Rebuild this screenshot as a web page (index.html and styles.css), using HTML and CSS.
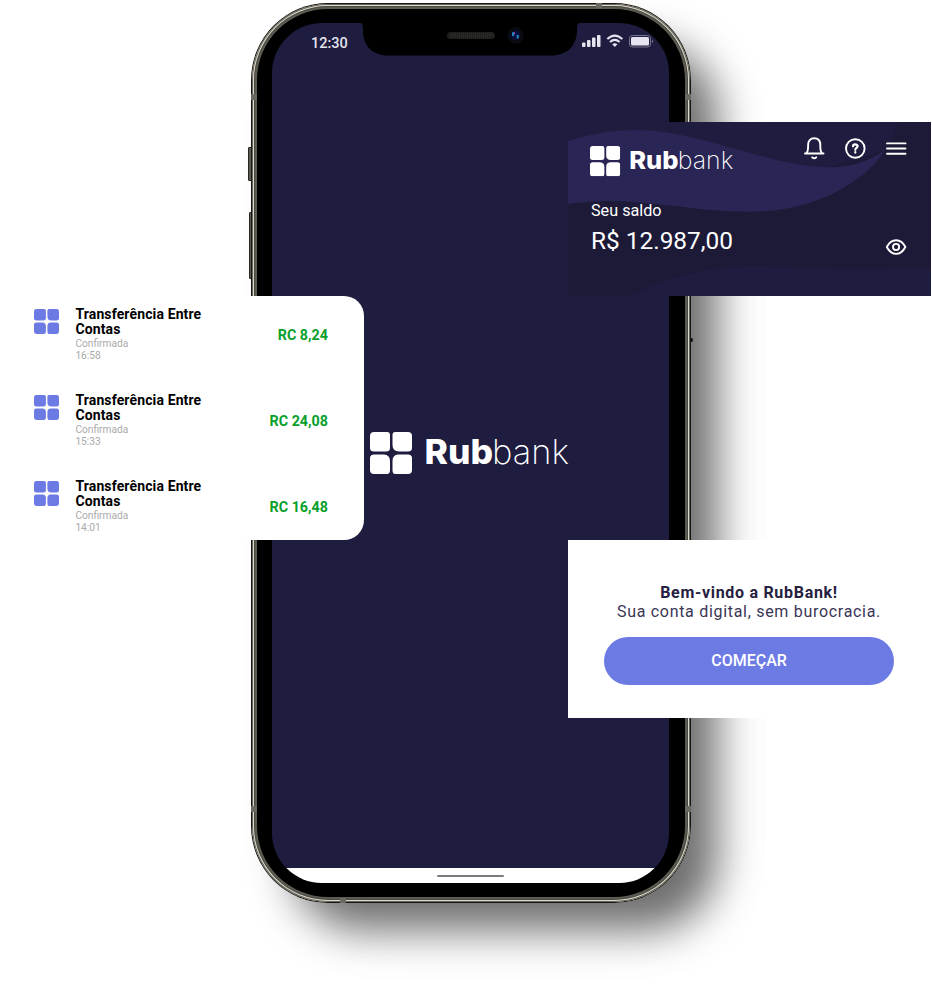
FILE: index.html
```html
<!DOCTYPE html>
<html lang="pt-BR">
<head>
<meta charset="utf-8">
<title>RubBank</title>
<link rel="stylesheet" href="styles.css">
</head>
<body>
<svg class="defs" width="0" height="0" aria-hidden="true">
  <symbol id="mark" viewBox="0 0 42 42">
    <path d="M4 0H17Q20 0 20 3V16Q20 19.500 16 19.500H4Q0 19.500 0 16V4Q0 0 4 0ZM25 0H38Q42 0 42 4V16Q42 19.500 38 19.500H29Q22.500 19 22.500 13V3Q22.500 0 25 0ZM4 22.500H14Q20 23 20 29V38Q20 42 17 42H4Q0 42 0 38V26Q0 22.500 4 22.500ZM28 22.500H38Q42 22.500 42 26V38Q42 42 38 42H25Q22.500 42 22.500 38V29Q22.500 23 28 22.500Z"/>
  </symbol>
</svg>
<main class="stage">
  <section class="phone">
    <i class="button mute"></i><i class="button volume"></i><i class="button power"></i>
    <div class="rim"><div class="band"><div class="bezel"><div class="screen">
      <header class="status">
        <span class="clock">12:30</span>
        <svg class="signals" width="72" height="14" viewBox="0 0 72 14">
          <g fill="#e6e4ee"><rect x="0" y="8.500" width="3.500" height="4.500" rx="1"/><rect x="5" y="6" width="3.500" height="7" rx="1"/><rect x="10" y="3.500" width="3.500" height="9.500" rx="1"/><rect x="15" y="1" width="3.500" height="12" rx="1"/></g>
          <g fill="none" stroke="#e6e4ee" stroke-width="2.100"><path d="M25.300 5.100Q32.800-2 40.300 5.100"/><path d="M28 8Q32.800 3.700 37.600 8"/></g>
          <path d="M30.200 10.300Q32.800 8.300 35.400 10.300L32.800 13Z" fill="#e6e4ee"/>
          <rect x="47.500" y="1.500" width="21" height="11.500" rx="3" fill="none" stroke="#77758d"/><rect x="49" y="3" width="18" height="8.500" rx="1.500" fill="#e6e4ee"/><path d="M70 5.500Q72.200 7.200 70 9Z" fill="#77758d"/>
        </svg>
      </header>
      <svg class="logo large" width="200" height="43" viewBox="0 0 200 43">
        <use href="#mark" x="0" y="0" width="42" height="42"/>
        <text class="rub" x="54.500" y="32.300" textLength="68.500" lengthAdjust="spacingAndGlyphs">Rub</text>
        <text class="bank" x="122" y="32.300" textLength="77" lengthAdjust="spacingAndGlyphs">bank</text>
      </svg>
      <footer class="home"><i></i></footer>
    </div></div></div></div>
    <svg class="notch" width="214" height="34" viewBox="0 0 214 34">
      <path d="M-5 0Q0 0 0 6V9C0 24 10 33.500 25 33.500H188C204 33.500 213.500 24 214 9V6Q214 0 219 0V-5H-5Z"/>
      <rect x="84" y="10" width="48" height="7" rx="3.500" fill="#20201f"/>
      <path d="M88 13.500H129" stroke="#2c2c2a" stroke-width="4" stroke-dasharray="1 1"/>
      <circle cx="152.500" cy="13.300" r="8.300" fill="#090a12"/><circle cx="152.500" cy="13.300" r="4.500" fill="#080e40"/>
      <path d="M150 10.300V14M154.700 13V16.500" stroke="#2088bd" stroke-width="2"/><path d="M151.500 10V12.500" stroke="#8a38c4"/>
    </svg>
    <i class="seam s1"></i><i class="seam s2"></i><i class="seam s3"></i><i class="seam s4"></i><i class="seam flat s5"></i><i class="seam flat s6"></i>
  </section>

  <section class="balance">
    <svg class="waves" width="363" height="174" viewBox="0 0 363 174">
      <path d="M0 0H330C326 14 323 21 317 28L200 65L0 82Z" fill="#1e1c3f"/>
      <path d="M0 19C58 1 96 7 150 22C220 42 276 60 318 27C294 64 245 86 199 89C128 94 69 71 0 82Z" fill="#292554"/>
      <path d="M62 174C104 153 145 143 190 144S270 149 363 145V174Z" fill="#1e1c3f"/>
    </svg>
    <div class="top">
      <svg class="logo" width="144" height="31" viewBox="0 0 200 43">
        <use href="#mark" x="0" y="0" width="42" height="42"/>
        <text class="rub" x="54.500" y="32.300" textLength="68.500" lengthAdjust="spacingAndGlyphs">Rub</text>
        <text class="bank" x="122" y="32.300" textLength="77" lengthAdjust="spacingAndGlyphs">bank</text>
      </svg>
      <nav class="icons">
        <svg width="22" height="24" viewBox="0 0 22 24"><path d="M2 17.500H20.500M3.500 17C5.300 15 5.100 12.700 5.100 9C5.100 4.700 7.300 2.300 11.200 2.300S17.300 4.700 17.300 9C17.300 12.700 17.100 15 18.900 17M9.200 21.300Q11.200 23.300 13.200 21.300"/></svg>
        <svg width="22" height="24" viewBox="0 0 22 24"><circle cx="11.300" cy="12.500" r="9.300"/><path d="M9 10.300C9 7.700 13.600 7.600 13.600 10.300C13.600 12 11.300 12 11.300 13.800M11.300 16.200V16.600" stroke-width="2.200"/></svg>
        <svg width="22" height="24" viewBox="0 0 22 24"><path d="M2 7.400H20.500M2 12.500H20.500M2 17.700H20.500"/></svg>
      </nav>
    </div>
    <div class="bottom">
      <div><p class="label">Seu saldo</p><p class="amount">R$ 12.987,00</p></div>
      <svg class="eye" width="22" height="18" viewBox="0 0 22 18"><path d="M1.800 9Q5.300 2.200 11.100 2.200T20.400 9Q16.700 15.900 11.100 15.900T1.800 9Z"/><circle cx="11.100" cy="9" r="3.100"/></svg>
    </div>
  </section>

  <section class="transfers">
    <article><svg width="25" height="25"><use href="#mark" width="25" height="25"/></svg><div><h2>Transferência Entre<br>Contas</h2><p>Confirmada<br>16:58</p></div><strong>RC 8,24</strong></article>
    <article><svg width="25" height="25"><use href="#mark" width="25" height="25"/></svg><div><h2>Transferência Entre<br>Contas</h2><p>Confirmada<br>15:33</p></div><strong>RC 24,08</strong></article>
    <article><svg width="25" height="25"><use href="#mark" width="25" height="25"/></svg><div><h2>Transferência Entre<br>Contas</h2><p>Confirmada<br>14:01</p></div><strong>RC 16,48</strong></article>
  </section>

  <section class="welcome">
    <h1>Bem-vindo a RubBank!</h1>
    <p>Sua conta digital, sem burocracia.</p>
    <button>COMEÇAR</button>
  </section>
</main>
</body>
</html>
```
FILE: styles.css
```css
* { box-sizing: border-box; }
body { margin: 0; background: #fff; font-family: Roboto, "Liberation Sans", sans-serif; }
h1, h2, p { margin: 0; }
svg { display: block; flex: none; }
.defs { position: absolute; }
.stage { position: relative; width: 932px; height: 988px; overflow: hidden; padding: 3px 0 0 251px; }

/* device */
.phone { position: relative; width: 440px; height: 900px; border-radius: 77px; box-shadow: 33px 34px 42px -8px rgba(0,0,0,.54), 35px 36px 60px -8px rgba(0,0,0,.08); }
.rim { position: relative; height: 100%; padding: 1px; border-radius: 77px; background: #161614; }
.band { height: 100%; padding: 5px; border-radius: 76px; background: #5c5b52; box-shadow: inset 0 0 0 1px #66655b, inset 0 0 0 2px #ddd9cd, inset 0 0 0 3px #4b4a43; }
.bezel { height: 100%; padding: 14px 15px 14px; border-radius: 71px; background: #000; }
.screen { display: flex; flex-direction: column; align-items: center; justify-content: space-between; height: 860px; width: 397px; border-radius: 50px; overflow: hidden; background: #1e1c3f; }
.status { display: flex; justify-content: space-between; width: 100%; padding: 11px 15px 0 39px; }
.clock { color: #e6e4ee; font-size: 14.500px; font-weight: 500; line-height: 20px; }
.home { display: flex; justify-content: center; width: 100%; height: 15px; padding-top: 7px; background: #fff; }
.home i { width: 67px; height: 2px; border-radius: 1px; background: #7c7c7c; }
.notch { position: absolute; left: 112px; top: 19px; overflow: visible; }
.button { position: absolute; width: 4px; background: #5c5b52; border: 1px solid #252522; border-radius: 1px; }
.mute { left: -3px; top: 144px; height: 34px; }
.volume { left: -2px; top: 209px; height: 67px; }
.power { right: -2px; top: 335px; height: 4px; background: #000; }
.seam { position: absolute; width: 6px; height: 6px; background: #6b6a62; }
.seam.flat { width: 6px; height: 5px; }
.s1 { left: 0; top: 91px; } .s2 { right: 0; top: 91px; } .s3 { left: 0; top: 803px; } .s4 { right: 0; top: 803px; }
.s5 { left: 345px; top: 0; } .s6 { left: 89px; bottom: 0; }

.logo { fill: #fff; font-family: Inter, Roboto, sans-serif; font-size: 34px; overflow: visible; }
.large { margin: 0 0 16px -2px; }
.rub { font-weight: 800; }
.bank { font-weight: 200; }

/* balance card */
.balance { position: absolute; left: 568px; top: 122px; width: 363px; height: 174px; padding: 14px 24px 0 22px; color: #fff; background: #1c1a37; }
.waves { position: absolute; inset: 0; }
.top, .bottom { position: relative; display: flex; justify-content: space-between; }
.top .logo { margin-top: 9.500px; }
.icons { display: flex; gap: 19px; }
.icons svg, .eye { fill: none; stroke: #fff; stroke-width: 1.900; stroke-linecap: round; stroke-linejoin: round; }
.bottom { margin-top: 23.500px; padding-left: 1px; }
.label { padding-top: 1px; font-size: 16.200px; line-height: 20px; }
.amount { margin-top: 5px; font-size: 24.400px; line-height: 30px; }
.eye { margin-top: 38px; }

/* transfer list */
.transfers { position: absolute; left: 0; top: 296px; width: 364px; height: 244px; padding-top: 12px; background: #fff; border-radius: 0 20px 20px 0; }
.transfers article { display: flex; height: 86px; padding: 0 36px 0 34.400px; }
.transfers article svg { fill: #6c7ae4; margin-top: 1.300px; }
.transfers article > div { flex: 1; margin-left: 16px; margin-top: -1px; }
.transfers h2 { font-size: 14px; font-weight: 700; line-height: 14.500px; letter-spacing: .13px; color: #000; }
.transfers p { margin-top: 2px; font-size: 10.200px; line-height: 12.300px; color: #aaa; }
.transfers strong { margin-top: 17px; font-size: 14.300px; font-weight: 700; line-height: 20px; color: #08a02b; }

/* welcome card */
.welcome { position: absolute; left: 568px; top: 540px; width: 364px; height: 178px; padding: 42.500px 38px 0 36px; background: #fff; color: #25213f; text-align: center; }
.welcome h1 { font-size: 16px; font-weight: 700; line-height: 19px; letter-spacing: .7px; }
.welcome p { font-size: 16px; line-height: 19px; letter-spacing: .7px; white-space: nowrap; color: #3a3655; }
.welcome button { display: block; width: 290px; height: 48px; margin-top: 16px; padding: 0 0 1px; border: 0; border-radius: 25px; background: #6c7ae4; color: #fff; font: 500 16px Roboto, sans-serif; }
```
